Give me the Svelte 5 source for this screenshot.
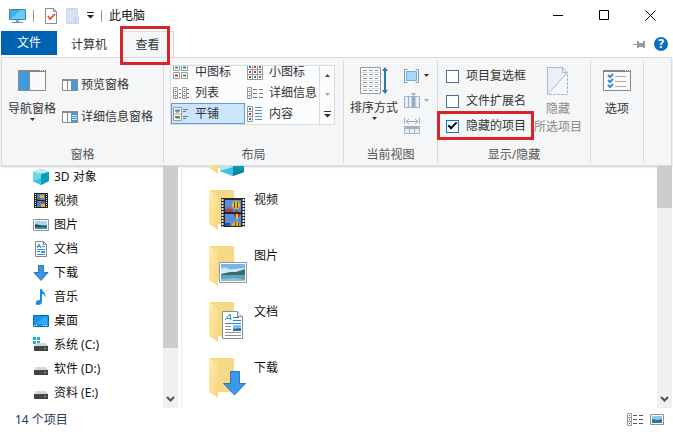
<script>
  let activeTab = $state('查看');
  let layout = $state('平铺');
  let checkboxes = $state(false);
  let extensions = $state(false);
  let hiddenItems = $state(true);

  const layouts = [
    { name: '中图标', icon: 'medium' },
    { name: '小图标', icon: 'small' },
    { name: '列表', icon: 'list' },
    { name: '详细信息', icon: 'details' },
    { name: '平铺', icon: 'tiles' },
    { name: '内容', icon: 'content' }
  ];

  const places = [
    { name: '3D 对象', icon: 'cube' },
    { name: '视频', icon: 'film' },
    { name: '图片', icon: 'photo' },
    { name: '文档', icon: 'doc' },
    { name: '下载', icon: 'down' },
    { name: '音乐', icon: 'music' },
    { name: '桌面', icon: 'desktop' },
    { name: '系统 (C:)', icon: 'sysdrive' },
    { name: '软件 (D:)', icon: 'drive' },
    { name: '资料 (E:)', icon: 'drive' }
  ];

  const folders = [
    { name: '视频', icon: 'film' },
    { name: '图片', icon: 'photo' },
    { name: '文档', icon: 'doc' },
    { name: '下载', icon: 'down' }
  ];
</script>

{#snippet caret()}
  <svg class="caret" width="7" height="4" viewBox="0 0 7 4"><path d="M1 0h5L3.500 3z" fill="currentColor" /></svg>
{/snippet}

{#snippet pane(kind)}
  <svg width="16" height="13" viewBox="0 0 16 13">
    <path d="M.5.5h15v11H.5z" fill="#fff" stroke="#8a8a8a" />
    <path d="M0 0h16v2H0z" fill="#8a8a8a" />
    <path d="M5.500 2v9.500" stroke="#8a8a8a" />
    <path d="M9 2h6v9H9z" fill="#3e9be0" />
    {#if kind === 'details'}
      <path d="M10 4.500h5M10 6.500h5M10 8.500h5" stroke="#d5ebfb" />
    {/if}
  </svg>
{/snippet}

{#snippet layoutIcon(name)}
  <svg width="16" height="16" viewBox="0 0 16 16" fill="none" stroke="#999">
    {#if name === 'medium'}
      <path d="M.5.5h6v6h-6zM8.500.5h6v6h-6zM.5 8.500h6v6h-6zM8.500 8.500h6v6h-6z" fill="#fff" />
      <path d="M2 3.500h3M10 11.500h3" stroke="#3f8f54" stroke-width="2" />
      <path d="M10 3.500h3" stroke="#2878b8" stroke-width="2" />
      <path d="M2 11.500h3" stroke="#a63b31" stroke-width="2" />
    {:else if name === 'small'}
      <path d="M.5.5h15v15H.5zM5.500.5v15M10.500.5v15M.5 5.500h15M.5 10.500h15" fill="#fff" />
      <path d="M2 3h2M12 8h2M7 13h2" stroke="#2878b8" stroke-width="2" />
      <path d="M7 3h2M2 8h2M12 13h2" stroke="#b44439" stroke-width="2" />
      <path d="M12 3h2M7 8h2M2 13h2" stroke="#7d4f50" stroke-width="2" />
    {:else if name === 'list'}
      <path d="M.5 2.500h4v11h-4zM9.500 2.500h4v11h-4zM.5 6.500h4M.5 10.500h4M9.500 6.500h4M9.500 10.500h4" fill="#fff" />
      <path d="M2 4.500h1M2 8.500h1M2 12h1M11 4.500h1M11 8.500h1M11 12h1M6 4.500h2M6 8.500h2M6 12.500h2M14 4.500h2M14 8.500h2M14 12.500h2" stroke="#666" />
    {:else if name === 'details'}
      <path d="M.5 2.500h4v11h-4zM.5 6.500h4M.5 10.500h4" fill="#fff" />
      <path d="M2 4.500h1M2 8.500h1M2 12h1M6 4.500h4M12 4.500h4M6 8.500h4M12 8.500h4M6 12.500h4M12 12.500h4" stroke="#777" />
    {:else if name === 'tiles'}
      <path d="M.5 1.500h8v13h-8zM.5 8h8" fill="#fff" />
      <path d="M2 4.500h5" stroke="#3a8fd0" stroke-width="2" />
      <path d="M3 6h3M3 12h4" stroke="#45835a" />
      <path d="M2 11h5" stroke="#638b49" stroke-width="2" />
      <path d="M10 3.500h5M10 5.500h3M10 10.500h5M10 12.500h3" stroke="#777" />
    {:else}
      <path d="M.5.5h5v15h-5zM.5 5.500h5M.5 10.500h5" fill="#fff" />
      <path d="M2 3h2M2 13h2" stroke="#2878b8" stroke-width="2" />
      <path d="M2 8h2" stroke="#a63b31" stroke-width="2" />
      <path d="M8 1.500h7M8 4.500h7M8 7.500h7M8 10.500h7M8 13.500h7" stroke="#5c8fc6" />
    {/if}
  </svg>
{/snippet}

{#snippet placeIcon(name)}
  <svg width="16" height="16" viewBox="0 0 16 16">
    {#if name === 'cube'}
      <path d="M0 3l8-3 8 3v9l-8 4-8-4z" fill="#30b6cf" />
      <path d="M0 3l8-3 8 3-8 2z" fill="#b5eef5" />
      <path d="M0 3l8 2v7l-8 0z" fill="#6fd7e5" />
      <path d="M8 5l8-2v9l-8 4z" fill="#0c9dba" />
      <path d="M0 12l8-3v7z" fill="#3ec3d8" />
    {:else if name === 'film'}
      <path d="M1 0h14v15H1z" fill="#222" />
      <path d="M4 1h8v6H4zM4 8h8v6H4z" fill="#4a7fd6" />
      <path d="M7 2h4v3H7zM8 11h4v3H8z" fill="#e5b52b" />
      <path d="M4 5h3v2H4zM8 8h3v2H8z" fill="#a04b32" />
      <path d="M2.500 1v14M13.500 1v14" stroke="#eee" stroke-dasharray="1 1" />
    {:else if name === 'photo'}
      <path d="M.5 2.500h15v11H.5z" fill="#fff" stroke="#8e979d" />
      <path d="M2 4h12v8H2z" fill="#a9d4f1" />
      <path d="M2 7l5 1 7 0v4H2z" fill="#4684a4" />
      <path d="M2 8c4-1 6 2 12 1v1H2z" fill="#254e50" />
    {:else if name === 'doc'}
      <path d="M2.500.5h8l3 3v12h-11z" fill="#fff" stroke="#888" />
      <path d="M10.500.5v3h3" fill="none" stroke="#888" />
      <path d="M4 7l2-4 2 4M4 5.500h4M9 5.500h3M4 8.500h8M4 10.500h3M4 13.500h8" fill="none" stroke="#3488c7" />
      <path d="M8 10h4v2H8z" fill="#3a91cf" />
    {:else if name === 'down'}
      <path d="M5.500.5h5v7h4.500l-7 8-7-8h4.500z" fill="#3995e2" stroke="#2774b8" />
    {:else if name === 'music'}
      <path d="M7 0h2c0 3 5 4 3 9 0-3-1-4-3-4v8c0 2-2 3-4 3s-3-1-2-3 2-2 4-2z" fill="#168fe0" />
    {:else if name === 'desktop'}
      <path d="M.5 2.500h15v11H.5z" fill="#1596ec" stroke="#0869a8" />
      <path d="M2 11L12 4h2v7z" fill="#35aaf5" />
      <path d="M1 12.500h1M3 12.500h1M10 12.500h1M12 12.500h2" stroke="#fff" />
    {:else}
      {#if name === 'sysdrive'}
        <path d="M0 0h3v3H0zM4 0h3v3H4zM0 4h3v3H0zM4 4h3v3H4z" fill="#20afd5" />
      {/if}
      <path d="M3 6h10l2 4H1z" fill="#d4d6d8" />
      <path d="M1 9h14v5H1z" fill="#414548" />
      <path d="M11 11.500h2" stroke="#63e07e" />
    {/if}
  </svg>
{/snippet}

{#snippet folder(name)}
  <svg width="48" height="48" viewBox="0 0 48 48">
    <defs>
      <linearGradient id="flap-{name}" x1="0" y1="0" x2="1" y2="1">
        <stop offset="0" stop-color="#ffecae" />
        <stop offset="1" stop-color="#f7d67c" />
      </linearGradient>
    </defs>
    <path d="M6 4h24v34H12z" fill="#f6d986" />
    <path d="M5 4l9 6v34l-9-6z" fill="url(#flap-{name})" />
    {#if name === 'cube'}
      <path d="M16 22l13-5 11 5v20l-11 4-13-5z" fill="#30b6cf" />
      <path d="M16 22l13 4v12l-13 3z" fill="#b5e6ec" />
      <path d="M29 26l11-4v20l-11 4z" fill="#0c9bb5" />
      <path d="M16 41l13-4v9z" fill="#3cc3d8" />
      <path d="M29 37l11 4v1l-11 4z" fill="#0b86a2" />
    {:else if name === 'film'}
      <path d="M17 12h24v29H17z" fill="#26292c" />
      <path d="M18.500 13v28M39.500 13v28" stroke="#e8e8e8" stroke-width="2" stroke-dasharray="2 1" />
      <path d="M21 14h16v12H21zM21 28h16v12H21z" fill="#5a8ede" />
      <circle cx="32" cy="19" r="4" fill="#e9bd23" />
      <path d="M30 16h1v6h-1zM33 16h1v6h-1z" fill="#783425" />
      <path d="M31 24h3v2h-3z" fill="#9e542b" />
      <path d="M21 23h8v3h-8z" fill="#7c4a78" />
      <circle cx="25" cy="23" r="2" fill="#d4403c" />
      <path d="M29 28h8l-3 4h-2z" fill="#c43131" />
      <path d="M32 28h2v5h-2z" fill="#edc62d" />
      <path d="M28 40c0-6 8-6 8 0z" fill="#e6bb22" />
      <path d="M31 36h1v4h-1zM34 37h1v3h-1z" fill="#783425" />
      <path d="M21 37h5v3h-5z" fill="#275096" />
    {:else if name === 'photo'}
      <path d="M15.500 20.500h27v20h-27z" fill="#fff" stroke="#8e979d" />
      <path d="M17 22h24v17H17z" fill="#77b4e8" />
      <path d="M17 27c5-4 8 2 13 0l11-1v6H17z" fill="#d2e8f7" />
      <path d="M17 32l9-2 6 0 9-3v6H17z" fill="#386d65" />
      <path d="M17 33h24v6H17z" fill="#5f9fc2" />
      <path d="M17 37l14-1 10 2v1H17z" fill="#93bfca" />
    {:else if name === 'doc'}
      <path d="M18.500 13.500h15l5 5v22h-20z" fill="#fff" stroke="#8c8c8c" />
      <path d="M33.500 13.500v5h5" fill="#eee" stroke="#8c8c8c" />
      <path d="M21 22l5-6 1 6M23 20.500h4M29 19.500h6M29 22.500h8M21 25.500h16" fill="none" stroke="#2384ce" />
      <path d="M21 28.500h6M21 31.500h6M21 34.500h16M21 37.500h16" stroke="#8a9297" />
      <path d="M29 27h8v6h-8z" fill="#236da4" />
      <path d="M29 27h8v3l-8 1z" fill="#82bee5" />
    {:else}
      <path d="M26.500 17.500h9v12h6L30.500 41l-11-11.500h7z" fill="#3c98e6" stroke="#2878bf" />
    {/if}
  </svg>
{/snippet}

<div class="window">
  <header class="titlebar">
    <svg width="17" height="16" viewBox="0 0 17 16">
      <path d="M.5 1.500h16v10H.5z" fill="#3bb1ee" stroke="#3d86ad" />
      <path d="M1 11L12 2h4v9z" fill="#6bcbf7" />
      <path d="M7 12h3v2H7z" fill="#88a5b4" />
      <path d="M3 14.500h11" stroke="#4b96c0" />
    </svg>
    <i class="bar"></i>
    <button class="quick" aria-label="属性">
      <svg width="13" height="16" viewBox="0 0 13 16">
        <path d="M.5.5h8l3 3v12H.5z" fill="#fff" stroke="#8b8b8b" />
        <path d="M8.500.5v3h3" fill="none" stroke="#8b8b8b" />
        <path d="M3 8l2 3 5-5" fill="none" stroke="#e0663c" stroke-width="2" />
      </svg>
    </button>
    <button class="quick" aria-label="新建文件夹">
      <svg width="13" height="16" viewBox="0 0 13 16">
        <path d="M.5.5h11v7l1 1v7H.5z" fill="#d7e2f4" stroke="#c8d5ea" />
        <path d="M9.500 9v6" stroke="#b7c7e1" />
      </svg>
    </button>
    <button class="quick" aria-label="自定义快速访问工具栏">
      <svg width="7" height="7" viewBox="0 0 7 7"><path d="M0 0h7v1H0zM0 3h7L3.500 6.500z" fill="#222" /></svg>
    </button>
    <i class="bar"></i>
    <span>此电脑</span>
    <div class="controls">
      <button aria-label="最小化"><svg width="11" height="11" viewBox="0 0 11 11"><path d="M0 5.500h10" stroke="#000" /></svg></button>
      <button aria-label="最大化"><svg width="11" height="11" viewBox="0 0 11 11"><path d="M.5.5h9v9h-9z" fill="none" stroke="#000" /></svg></button>
      <button aria-label="关闭"><svg width="11" height="11" viewBox="0 0 11 11"><path d="M.5.5l10 10M10.500.5l-10 10" stroke="#000" /></svg></button>
    </div>
  </header>

  <nav class="tabs">
    <button class="file">文件</button>
    <button class="tab" class:active={activeTab === '计算机'} onclick={() => (activeTab = '计算机')}>计算机</button>
    <button class="tab marked" class:active={activeTab === '查看'} onclick={() => (activeTab = '查看')}>查看</button>
    <div class="tab-tools">
      <button aria-label="固定功能区">
        <svg width="13" height="9" viewBox="0 0 13 9"><path d="M0 4h4v1H0zM4 1h2v7H4zM6 3h4v4H6zM10 1h2v7h-2z" fill="#999" /></svg>
      </button>
      <button class="help" aria-label="帮助">?</button>
    </div>
  </nav>

  <section class="ribbon">
    <div class="group panes">
      <div class="tools">
        <button class="big">
          <svg width="28" height="22" viewBox="0 0 28 22">
            <path d="M.5.5h27v20H.5z" fill="#fafafa" stroke="#8a8a8a" />
            <path d="M0 0h28v2H0z" fill="#858585" />
            <path d="M22 .5h1M24 .5h1M26 .5h1" stroke="#fff" />
            <path d="M1 2h10v18H1z" fill="#3e9be0" />
            <path d="M11.500 2v18" stroke="#8a8a8a" />
          </svg>
          <span>导航窗格</span>
          {@render caret()}
        </button>
        <div class="stack">
          <button class="row">{@render pane('preview')}预览窗格</button>
          <button class="row">{@render pane('details')}详细信息窗格</button>
        </div>
      </div>
      <h2>窗格</h2>
    </div>

    <div class="group layouts">
      <div class="gallery">
        <div class="options">
          {#each layouts as item}
            <button class:selected={layout === item.name} onclick={() => (layout = item.name)}>
              {@render layoutIcon(item.icon)}{item.name}
            </button>
          {/each}
        </div>
        <div class="spin">
          <button aria-label="上一行"><svg width="7" height="4" viewBox="0 0 7 4"><path d="M1 3h5L3.500 0z" fill="#444" /></svg></button>
          <button aria-label="下一行"><svg width="7" height="4" viewBox="0 0 7 4"><path d="M1 0h5L3.500 3z" fill="#aaa" /></svg></button>
          <button aria-label="更多"><svg width="7" height="7" viewBox="0 0 7 7"><path d="M0 0h7v1H0zM0 3h7L3.500 6.500z" fill="#333" /></svg></button>
        </div>
      </div>
      <h2>布局</h2>
    </div>

    <div class="group current">
      <div class="tools">
        <button class="big sort">
          <svg width="28" height="28" viewBox="0 0 28 28">
            <path d="M.5.5h20v26H.5z" fill="#fff" stroke="#999" />
            <path d="M3 3.500h15M3 7.500h15M3 11.500h15M3 15.500h15M3 19.500h15M3 23.500h15" stroke="#8797a4" stroke-dasharray="4 2" />
            <path d="M1 5.500h19M1 9.500h19M1 13.500h19M1 17.500h19M1 21.500h19" stroke="#ddd" />
            <path d="M25 2v23" stroke="#2b7ca9" stroke-width="2" />
            <path d="M22 4l3-4 3 4zM22 23l3 4 3-4z" fill="#2b7ca9" />
          </svg>
          <span>排序方式</span>
          {@render caret()}
        </button>
        <div class="minis">
          <button aria-label="分组依据">
            <svg width="16" height="16" viewBox="0 0 16 16">
              <path d="M3.500 1.500h-3v13h3M11.500 1.500h3v13h-3" fill="none" stroke="#8797a8" />
              <path d="M2.500 3.500h10v9h-10z" fill="#a9d8fa" stroke="#69aee0" />
            </svg>
            {@render caret()}
          </button>
          <button aria-label="添加列" disabled>
            <svg width="16" height="16" viewBox="0 0 16 16">
              <path d="M.5 3.500h15v11H.5z" fill="#e9eff8" stroke="#a3b0c7" />
              <path d="M4.500 4v10M8 4h3v10H8z" fill="#9cabc5" stroke="#9cabc5" />
              <path d="M7 0h5L9.500 3z" fill="#9cabc5" />
            </svg>
            {@render caret()}
          </button>
          <button aria-label="将所有列调整为合适的大小" disabled>
            <svg width="16" height="16" viewBox="0 0 16 16">
              <path d="M.5 0v6M15.500 0v6M2 3.500h12M5 1L2 3.500 5 6M11 1l3 2.500L11 6" fill="none" stroke="#9cabc5" />
              <path d="M.5 8.500h15v7H.5zM5.500 8.500v7M10.500 8.500v7" fill="#e9eff8" stroke="#a3b0c7" />
              <path d="M0 9h16v2H0z" fill="#a3b0c7" />
            </svg>
          </button>
        </div>
      </div>
      <h2>当前视图</h2>
    </div>

    <div class="group visibility">
      <div class="tools">
        <div class="checks">
          <label><input type="checkbox" bind:checked={checkboxes} />项目复选框</label>
          <label><input type="checkbox" bind:checked={extensions} />文件扩展名</label>
          <label class="marked"><input type="checkbox" bind:checked={hiddenItems} />隐藏的项目</label>
        </div>
        <button class="big hide" disabled>
          <svg width="22" height="28" viewBox="0 0 22 28">
            <path d="M.5 27V.5h15l5 5z" fill="#eaf0fa" />
            <path d="M.5 27.500V.5h15l5 5L.5 27.500" fill="none" stroke="#a8b6cf" />
            <path d="M15.500.5v5h5" fill="none" stroke="#a8b6cf" />
            <path d="M20.500 7v20.500H1" fill="none" stroke="#a8b6cf" stroke-dasharray="3 1" />
          </svg>
          <span>隐藏<br />所选项目</span>
        </button>
      </div>
      <h2>显示/隐藏</h2>
    </div>

    <div class="group settings">
      <div class="tools">
        <button class="big">
          <svg width="28" height="22" viewBox="0 0 28 22">
            <path d="M.5.5h27v20H.5z" fill="#fafafa" stroke="#8a8a8a" />
            <path d="M0 0h28v2H0z" fill="#858585" />
            <path d="M22 .5h1M24 .5h1M26 .5h1" stroke="#fff" />
            <path d="M5 5l2 2 3-3M5 10l2 2 3-3M5 15l2 2 3-3" fill="none" stroke="#3d8ed0" stroke-width="2" />
            <path d="M12 6.500h11M12 11.500h11M12 16.500h11" stroke="#b9a99d" />
          </svg>
          <span>选项</span>
        </button>
      </div>
    </div>
  </section>

  <main>
    <aside>
      <ul class="places">
        {#each places as place}
          <li><a href="#{place.name}">{@render placeIcon(place.icon)}{place.name}</a></li>
        {/each}
      </ul>
      <div class="scroll">
        <div class="thumb long"></div>
        <svg width="9" height="6" viewBox="0 0 9 6"><path d="M1 1l3.500 3.500L8 1" fill="none" stroke="#505050" stroke-width="2" /></svg>
      </div>
    </aside>
    <div class="content">
      <ul class="tiles">
        <li aria-label="3D 对象">{@render folder('cube')}</li>
        {#each folders as item}
          <li>{@render folder(item.icon)}<span>{item.name}</span></li>
        {/each}
      </ul>
      <div class="scroll">
        <div class="thumb short"></div>
        <svg width="9" height="6" viewBox="0 0 9 6"><path d="M1 1l3.500 3.500L8 1" fill="none" stroke="#505050" stroke-width="2" /></svg>
      </div>
    </div>
  </main>

  <footer>
    <span>14 个项目</span>
    <div class="views">
      <button aria-label="详细信息视图">
        <svg width="16" height="13" viewBox="0 0 16 13">
          <path d="M.5.5h4v12h-4zM.5 4.500h4M.5 8.500h4" fill="#fff" stroke="#999" />
          <path d="M2 2.500h1M2 6.500h1M2 10.500h1M6 2.500h4M12 2.500h4M6 6.500h4M12 6.500h4M6 10.500h4M12 10.500h4" stroke="#555" />
        </svg>
      </button>
      <button aria-label="大图标视图">
        <svg width="14" height="11" viewBox="0 0 14 11">
          <path d="M.5.5h13v10H.5z" fill="#fff" stroke="#8c9499" />
          <path d="M2 2h10v7H2z" fill="#91c8ed" />
          <path d="M2 5l6 1 4-1v4H2z" fill="#2f778f" />
        </svg>
      </button>
    </div>
  </footer>
</div>

<style>
  :global(body) {
    margin: 0;
    background: #fff;
  }

  .window {
    display: flex;
    flex-direction: column;
    height: 100vh;
    overflow: hidden;
    font: 12px/16px 'Noto Sans', 'Noto Sans CJK SC', sans-serif;
    color: #111;
  }

  button {
    font: inherit;
    color: inherit;
    background: none;
    border: 0;
    padding: 0;
  }

  svg {
    display: block;
    flex: none;
  }

  ul {
    list-style: none;
    margin: 0;
    padding: 0;
  }

  .titlebar {
    display: flex;
    align-items: center;
    flex: none;
    height: 31px;
    padding-left: 9px;
  }

  .bar {
    width: 1px;
    height: 12px;
    margin: 0 7px;
    background: #999;
  }

  .quick {
    margin-left: 4px;
  }

  .quick + .quick {
    margin-left: 8px;
  }

  .controls {
    display: flex;
    margin-left: auto;
  }

  .controls button {
    display: grid;
    place-items: center;
    width: 46px;
    height: 31px;
  }

  .tabs {
    display: flex;
    flex: none;
    height: 26px;
    padding-left: 1px;
  }

  .file {
    width: 56px;
    height: 24px;
    background: #0063b1;
    color: #fff;
  }

  .tab {
    width: 64px;
    border: 1px solid transparent;
    border-bottom: 0;
    color: #333;
  }

  .tab.marked {
    position: relative;
    width: 53px;
  }

  .tab.active {
    background: #f5f6f7;
    border-color: #dadbdc;
  }

  .marked::after {
    content: '';
    position: absolute;
    z-index: 2;
    border: 3px solid #d9222a;
    pointer-events: none;
  }

  .tab.marked::after {
    inset: -6px 3px -8px -2px;
  }

  .tab-tools {
    display: flex;
    align-items: center;
    gap: 8px;
    margin-left: auto;
    padding-right: 5px;
  }

  .help {
    width: 14px;
    height: 14px;
    border-radius: 50%;
    background: #0b6fc4;
    color: #fff;
    font-weight: bold;
    line-height: 14px;
  }

  .ribbon {
    display: flex;
    flex: none;
    height: 107px;
    margin: 0 1px;
    border: 1px solid #dadbdc;
    background: #f5f6f7;
    color: #333;
    box-shadow: 0 1px 2px #ccc;
  }

  .group {
    display: flex;
    flex-direction: column;
    justify-content: space-between;
    flex: none;
    box-sizing: border-box;
    margin: 2px 0;
    border-right: 1px solid #dadbdc;
  }

  .panes {
    width: 162px;
  }

  .layouts {
    width: 180px;
  }

  .current {
    width: 94px;
  }

  .visibility {
    width: 153px;
  }

  .settings {
    width: 53px;
  }

  .tools {
    display: flex;
  }

  h2 {
    margin: 0;
    font: inherit;
    text-align: center;
    color: #555;
  }

  .big {
    display: flex;
    flex-direction: column;
    align-items: center;
    gap: 9px;
    padding: 10px 6px 0;
  }

  .big .caret {
    margin-top: -8px;
  }

  .big.sort,
  .big.hide {
    gap: 5px;
    padding-top: 7px;
  }

  .big.sort .caret {
    margin-top: -4px;
  }

  .big.hide {
    margin-left: auto;
    padding-right: 8px;
    color: #8a8a8a;
    line-height: 18px;
  }

  .settings .tools {
    justify-content: center;
  }

  .stack {
    display: flex;
    flex-direction: column;
    gap: 16px;
    padding-top: 17px;
  }

  .row {
    display: flex;
    align-items: center;
    gap: 3px;
  }

  .gallery {
    display: flex;
    height: 60px;
    margin: 5px 8px 0 6px;
    border: 1px solid #dadbdc;
    box-sizing: border-box;
    background: #fbfcfd;
  }

  .options {
    display: grid;
    grid-template-columns: 1fr 1fr;
    grid-auto-rows: 21px;
    align-content: end;
    flex: 1;
    overflow: hidden;
  }

  .options button {
    display: flex;
    align-items: center;
    gap: 6px;
    padding-left: 1px;
    border: 1px solid transparent;
    line-height: 12px;
    white-space: nowrap;
  }

  .options .selected {
    background: #cce4fc;
    border-color: #659bd5;
  }

  .spin {
    display: grid;
    grid-template-rows: 1fr 1fr 1fr;
    width: 14px;
    border-left: 1px solid #dadbdc;
  }

  .spin button {
    display: grid;
    place-items: center;
  }

  .minis {
    display: flex;
    flex-direction: column;
    gap: 9px;
    padding-top: 8px;
  }

  .minis button {
    display: flex;
    align-items: center;
    gap: 3px;
  }

  .minis button:disabled {
    color: #aaa;
  }

  .checks {
    display: flex;
    flex-direction: column;
    gap: 9px;
    padding: 8px 0 0 8px;
  }

  label {
    position: relative;
    display: flex;
    align-items: center;
    gap: 7px;
    white-space: nowrap;
  }

  label.marked::after {
    inset: -7px -8px -6px -9px;
  }

  input {
    appearance: none;
    display: grid;
    place-items: center;
    box-sizing: border-box;
    width: 13px;
    height: 13px;
    margin: 0;
    border: 1px solid #4a7099;
    background: #fff;
  }

  input:checked {
    border-color: #0078d7;
  }

  input:checked::before {
    content: '';
    width: 9px;
    height: 5px;
    margin-bottom: 3px;
    border: solid #111;
    border-width: 0 0 2px 2px;
    box-sizing: border-box;
    transform: rotate(-45deg);
  }

  main {
    display: flex;
    flex: 1;
    min-height: 0;
  }

  aside,
  .content {
    display: flex;
    min-height: 0;
  }

  aside {
    width: 178px;
    padding-right: 3px;
    border-right: 1px solid #f0f0f0;
  }

  .content {
    flex: 1;
    padding-right: 1px;
  }

  .places,
  .tiles {
    display: flex;
    flex-direction: column;
    justify-content: flex-end;
    flex: 1;
    overflow: hidden;
  }

  .places {
    padding: 0 0 3px 33px;
  }

  .places a {
    display: flex;
    align-items: center;
    gap: 5px;
    height: 24px;
    color: inherit;
    text-decoration: none;
  }

  .tiles {
    padding: 0 0 2px 22px;
  }

  .tiles li {
    display: flex;
    flex: none;
    align-items: center;
    gap: 2px;
    height: 56px;
  }

  .tiles span {
    align-self: flex-start;
    margin-top: 10px;
  }

  .scroll {
    display: flex;
    flex-direction: column;
    align-items: center;
    justify-content: space-between;
    width: 15px;
    padding-bottom: 6px;
    box-sizing: border-box;
    background: #f0f0f0;
  }

  .thumb {
    width: 100%;
    background: #cdcdcd;
  }

  .long {
    height: 77%;
  }

  .short {
    height: 18%;
  }

  footer {
    display: flex;
    align-items: center;
    justify-content: space-between;
    flex: none;
    height: 23px;
    padding: 0 9px 1px 15px;
    color: #1e395b;
  }

  .views {
    display: flex;
    align-items: center;
    gap: 7px;
  }
</style>
